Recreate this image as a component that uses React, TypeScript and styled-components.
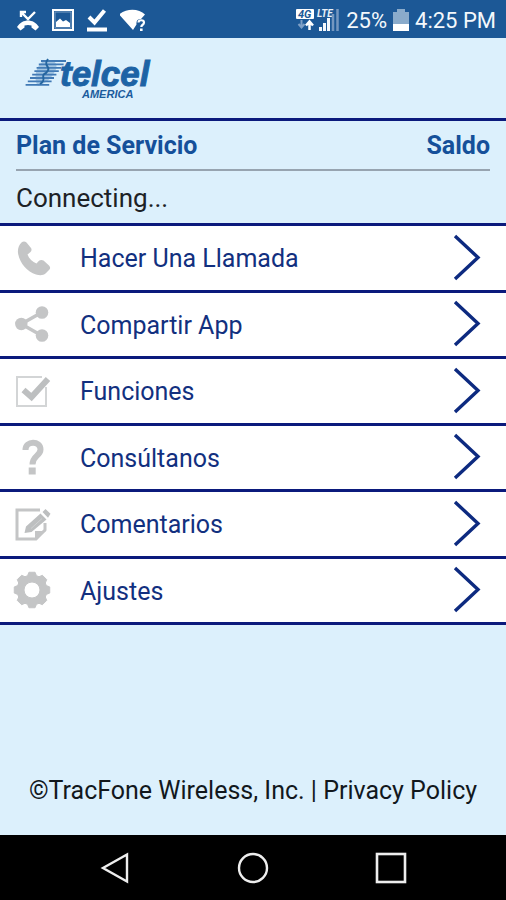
import React from "react";
import styled, { createGlobalStyle } from "styled-components";

const color = {
  bar: "#1c5896",
  pale: "#dcf0fc",
  navy: "#0b1a7c",
  label: "#12307f",
  title: "#15509a",
  icon: "#c4c5c6",
};

const GlobalStyle = createGlobalStyle`
  * { box-sizing: border-box; }
  body {
    margin: 0;
    background: ${color.pale};
    font-family: Roboto, "Liberation Sans", sans-serif;
  }
`;

const Screen = styled.div`
  display: flex;
  flex-direction: column;
  min-height: 100vh;
  background: ${color.pale};
`;

const StatusBar = styled.header`
  display: flex;
  align-items: center;
  justify-content: space-between;
  height: 38px;
  padding: 2px 10px 0 16px;
  background: ${color.bar};
  color: #f4f8fc;
  font-size: 22px;
`;

const StatusGroup = styled.div<{ $gap: number }>`
  display: flex;
  align-items: center;
  gap: ${(p) => p.$gap}px;
`;

const Brand = styled.div`
  display: flex;
  height: 80px;
  padding: 14px 24px;
`;

const Plan = styled.section`
  padding: 0 16px;
  border-top: 3px solid ${color.navy};
`;

const PlanHead = styled.div`
  display: flex;
  justify-content: space-between;
  align-items: center;
  height: 50px;
  padding-top: 2px;
  border-bottom: 2px solid #97a4b0;
`;

const PlanTitle = styled.h2`
  margin: 0;
  font-size: 25px;
  line-height: 32px;
  font-weight: 700;
  color: ${color.title};
`;

const PlanState = styled.p`
  display: flex;
  align-items: center;
  height: 52px;
  margin: 0;
  padding-top: 2px;
  font-size: 26px;
  color: #1d2226;
`;

const Menu = styled.ul`
  display: grid;
  grid-auto-rows: 1fr;
  min-height: 402px;
  margin: 0;
  padding: 0;
  list-style: none;
  background: #fff;
  border-top: 3px solid ${color.navy};
`;

const MenuItem = styled.li`
  display: flex;
  border-bottom: 3px solid ${color.navy};
`;

const MenuButton = styled.button`
  display: flex;
  flex: 1;
  align-items: center;
  gap: 30px;
  padding: 0 25px 0 14px;
  border: 0;
  background: transparent;
  color: ${color.label};
  font: inherit;
  font-size: 25px;
  text-align: left;
  cursor: pointer;
`;

const MenuLabel = styled.span`
  flex: 1;
  padding-top: 2px;
`;

const Legal = styled.footer`
  display: flex;
  flex: 1;
  align-items: flex-end;
  justify-content: center;
  padding: 0 16px 28px;
  font-size: 25px;
  line-height: 32px;
  color: #12181d;
  white-space: pre;
`;

const LegalLink = styled.a`
  color: inherit;
  text-decoration: none;
`;

const NavBar = styled.nav`
  display: flex;
  justify-content: center;
  height: 65px;
  background: #000;
`;

const NavButton = styled.button`
  display: flex;
  align-items: center;
  justify-content: center;
  width: 138px;
  padding: 0;
  border: 0;
  background: transparent;
  cursor: pointer;
`;

const MissedCall = () => (
  <svg width="24" height="24" viewBox="0 0 24 24" fill="none" stroke="#fff" aria-hidden="true">
    <path d="M1 19 C4 14.500 8 12.500 12 12.500 C16 12.500 20 14.500 23 19 L19.500 22.500 L15.500 19.500 V17.500 C13 16.800 11 16.800 8.500 17.500 V19.500 L4.500 22.500 Z" fill="#fff" stroke="none" />
    <path d="M5 4 L12 11 L19 4 M5 9 V4 H10" strokeWidth="2.400" />
  </svg>
);

const Picture = () => (
  <svg width="22" height="22" viewBox="0 0 22 22" aria-hidden="true">
    <rect x="1" y="1" width="20" height="20" fill="none" stroke="#fff" strokeWidth="2" />
    <rect x="3" y="3" width="16" height="16" fill="none" stroke="#7d9fc4" />
    <path d="M4 18 V13 L8 9.500 L11 12.500 L14 11 L18 14 V18 Z" fill="#fff" />
  </svg>
);

const Done = () => (
  <svg width="22" height="24" viewBox="0 0 22 24" fill="none" stroke="#fff" aria-hidden="true">
    <path d="M3 9 L8.500 14.500 L18.500 2.500" strokeWidth="4" />
    <path d="M1 21.500 H21" strokeWidth="4" />
  </svg>
);

const Wifi = () => (
  <svg width="28" height="24" viewBox="0 0 28 24" aria-hidden="true">
    <path d="M-1 6.500 C6 0 19 0 25 6.500 L21 11 C17.500 11 16 13 16.500 16.500 L13 22 Z" fill="#fff" />
    <path d="M18.500 14.500 C18.500 11.500 24 11.500 24 14.500 C24 17 21.300 16.500 21.300 19" fill="none" stroke="#fff" strokeWidth="2.200" />
    <rect x="20" y="20.500" width="2.600" height="2.500" fill="#fff" />
  </svg>
);

const Signal = () => (
  <svg width="46" height="26" viewBox="0 0 46 26" fontFamily="Roboto, sans-serif" fontStyle="italic" fontWeight="700" aria-hidden="true">
    <rect x="2" y="2" width="18" height="10" rx="1" fill="#fff" />
    <text x="4" y="11" fontSize="11" fill={color.bar}>4G</text>
    <path d="M7.500 13 V20 M4.500 17 L7.500 20.500 L10.500 17" fill="none" stroke="#7fa0c6" strokeWidth="2" />
    <path d="M15.500 23 V15 M12 18.500 L15.500 14.500 L19 18.500" fill="none" stroke="#fff" strokeWidth="2.500" />
    <text x="23" y="10" fontSize="10" fill="#e8f0f8">LTE</text>
    <path d="M26.500 24 V20 M30.500 24 V16 M34.500 24 V11" stroke="#f4f8fc" strokeWidth="3" />
    <path d="M39 24 V7 M43.500 24 V2" stroke="#7497c0" strokeWidth="2.500" />
  </svg>
);

const Battery = () => (
  <svg width="16" height="24" viewBox="0 0 16 24" aria-hidden="true">
    <path d="M0 4 H4 V1 H12 V4 H16 V16 H0 Z" fill="#8aabcb" />
    <rect y="16" width="16" height="7" fill="#fff" />
  </svg>
);

const stripes = Array.from({ length: 8 }, (_, i) => {
  const y = 9 + i * 3.4;
  return `M${17 - i * 2.2} ${y} H${42 - i * 2.4}`;
}).join(" ");

const Logo = () => (
  <svg width="132" height="38" viewBox="0 0 132 38" overflow="visible" role="img" aria-label="telcel America">
    <path d={stripes} stroke="#4079b5" strokeWidth="1.800" />
    <path d="M22 8 C33 7 35 14 30 21 C26 28 20 32 14 34 C9 27 12 11 22 8 Z" fill="#4d84bc" opacity=".4" />
    <path d="M24 7 C18 15 29 14 22 21 C15 24 24 27 16 32" fill="none" stroke="#24659f" strokeWidth="2" />
    <text x="36" y="34" fontFamily="Liberation Sans, sans-serif" fontSize="35" fontWeight="700" fontStyle="italic" fill="#1d63a5" stroke="#1d63a5">telcel</text>
    <text x="58" y="46" fontFamily="Liberation Sans, sans-serif" fontSize="11" fontWeight="700" fontStyle="italic" fill="#1b5b9c">AMERICA</text>
  </svg>
);

const Chevron = () => (
  <svg width="28" height="48" viewBox="0 0 28 48" fill="none" stroke="#0d2a80" strokeWidth="3.400" aria-hidden="true">
    <path d="M2 2 L25 23.500 L2 45" />
  </svg>
);

const toothPath = () => {
  const points: string[] = [];
  for (let i = 0; i < 8; i++) {
    const middle = (i * Math.PI) / 4 - Math.PI / 2;
    [[-0.3, 15], [-0.17, 18], [0.17, 18], [0.3, 15]].forEach(([turn, radius]) => {
      const x = 18 + Math.cos(middle + turn) * radius;
      const y = 18 + Math.sin(middle + turn) * radius;
      points.push(`${x.toFixed(2)} ${y.toFixed(2)}`);
    });
  }
  return `M${points.join(" L")} Z M26 18 A8 8 0 1 0 10 18 A8 8 0 1 0 26 18 Z`;
};

const icons: Record<string, React.ReactNode> = {
  phone: (
    <path
      fill={color.icon}
      d="M7.500 2.500 C9 1 11 1 12.500 2.500 L17 8 C18 9.500 17.500 11 16.500 12 L13.500 14.500 C15 18.500 18.500 22 22.500 23.500 L25 20.800 C26 19.800 28 19.500 29.500 20.500 L35 25.500 C36.500 27 36.500 28.500 35 30 L31.500 33.500 C29.500 35.500 25.500 35.500 22 34.500 C13 31.500 5.500 23 4 13 C3.500 8.500 5 5 7.500 2.500 Z"
    />
  ),
  share: (
    <g fill={color.icon}>
      <path d="M28 6.300 L7.300 18 L28 29.700" fill="none" stroke={color.icon} strokeWidth="3.500" />
      <circle cx="7.300" cy="18" r="6.200" />
      <circle cx="28" cy="6.500" r="6.300" />
      <circle cx="28" cy="29.500" r="6.300" />
    </g>
  ),
  check: (
    <g fill="none">
      <path d="M32 14 V33 H3 V4 H28" stroke="#d3d5d6" strokeWidth="2" />
      <path d="M9.500 17 L17.500 24 L34 6" stroke="#bdbfc0" strokeWidth="6" />
    </g>
  ),
  question: (
    <g>
      <path d="M11.500 11 C11.500 1.500 26.500 1.500 26.500 10.500 C26.500 17 18.500 16.500 18.500 25.500" fill="none" stroke={color.icon} strokeWidth="6" />
      <rect x="14.700" y="28.500" width="7" height="7" fill={color.icon} />
    </g>
  ),
  edit: (
    <g>
      <path d="M26 4 H3 V33 H22 L31 24 V17" fill="none" stroke={color.icon} strokeWidth="3" />
      <path d="M21 34 V25 H32 Z" fill={color.icon} />
      <path d="M10.500 27 L12 20.500 L26.500 7.500 L32.500 13.500 L17.500 26 Z M28.500 6 L31.500 3 L36.500 7.800 L34 11.800 Z" fill="#bdbfc0" />
      <path d="M17 22.500 L28 12.500" stroke="#d0d1d2" />
    </g>
  ),
  gear: <path d={toothPath()} fill={color.icon} stroke={color.icon} strokeLinejoin="round" fillRule="evenodd" />,
};

const items = [
  { icon: "phone", label: "Hacer Una Llamada" },
  { icon: "share", label: "Compartir App" },
  { icon: "check", label: "Funciones" },
  { icon: "question", label: "Consúltanos" },
  { icon: "edit", label: "Comentarios" },
  { icon: "gear", label: "Ajustes" },
];

export default function App() {
  return (
    <Screen>
      <GlobalStyle />
      <StatusBar>
        <StatusGroup $gap={12}>
          <MissedCall />
          <Picture />
          <Done />
          <Wifi />
        </StatusGroup>
        <StatusGroup $gap={6}>
          <Signal />
          <span>25%</span>
          <Battery />
          <span>4:25 PM</span>
        </StatusGroup>
      </StatusBar>
      <Brand>
        <Logo />
      </Brand>
      <main>
        <Plan>
          <PlanHead>
            <PlanTitle>Plan de Servicio</PlanTitle>
            <PlanTitle>Saldo</PlanTitle>
          </PlanHead>
          <PlanState>Connecting...</PlanState>
        </Plan>
        <Menu>
          {items.map((item) => (
            <MenuItem key={item.label}>
              <MenuButton type="button">
                <svg width="36" height="36" viewBox="0 0 36 36" overflow="visible" aria-hidden="true">
                  {icons[item.icon]}
                </svg>
                <MenuLabel>{item.label}</MenuLabel>
                <Chevron />
              </MenuButton>
            </MenuItem>
          ))}
        </Menu>
      </main>
      <Legal>
        <span>©TracFone Wireless, Inc. | </span>
        <LegalLink href="#privacy">Privacy Policy</LegalLink>
      </Legal>
      <NavBar aria-label="System">
        <NavButton type="button" aria-label="Back">
          <svg width="32" height="32" viewBox="0 0 32 32" fill="none" stroke="#eee" strokeWidth="2.400">
            <path d="M28 2.500 V29.500 L4 16 Z" />
          </svg>
        </NavButton>
        <NavButton type="button" aria-label="Home">
          <svg width="32" height="32" viewBox="0 0 32 32" fill="none" stroke="#eee" strokeWidth="2.400">
            <circle cx="16" cy="16" r="14" />
          </svg>
        </NavButton>
        <NavButton type="button" aria-label="Recent apps">
          <svg width="32" height="32" viewBox="0 0 32 32" fill="none" stroke="#eee" strokeWidth="2.600">
            <rect x="2" y="2" width="28" height="28" />
          </svg>
        </NavButton>
      </NavBar>
    </Screen>
  );
}
